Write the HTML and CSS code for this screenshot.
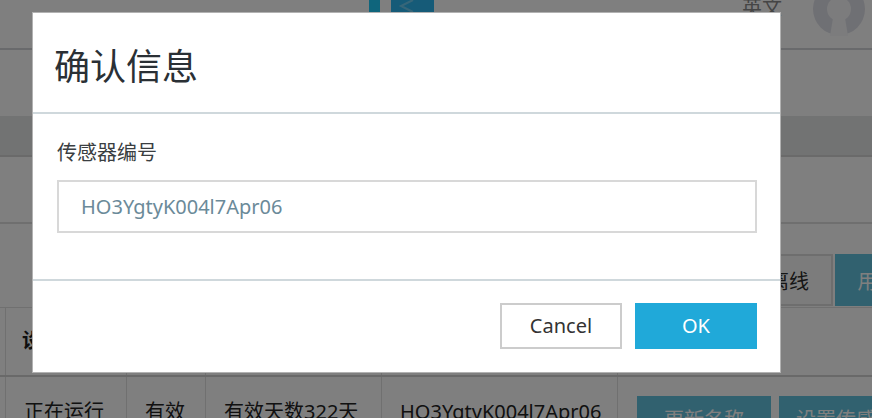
FILE: index.html
```html
<!DOCTYPE html>
<html lang="zh">
<head>
<meta charset="utf-8">
<title>确认信息</title>
<link rel="stylesheet" href="styles.css">
</head>
<body>
<div class="page">
  <header class="topbar">
    <div class="toggle-bar"></div>
    <div class="toggle-box">
      <svg class="chev" width="43" height="40" viewBox="0 0 43 40"><polyline points="22,0 10,6 22,12" fill="none" stroke="#6fcdf2" stroke-width="2"/></svg>
    </div>
    <span class="lang">英文</span>
    <div class="avatar">
      <svg width="54" height="54" viewBox="0 0 54 54">
        <circle cx="27" cy="27" r="26" fill="#dfe0e8"/>
        <circle cx="27" cy="27" r="12" fill="#f8f8fb"/>
        <polygon points="22,30 32,30 36,54 18,54" fill="#f8f8fb"/>
      </svg>
    </div>
  </header>
  <div class="crumb"></div>
  <div class="band"></div>
  <div class="toolbar"></div>
  <div class="actions">
    <button class="btn-outline">离线</button>
    <button class="btn-info">用户</button>
  </div>
  <div class="table">
    <div class="thead">
      <div class="th first">设备状态</div>
      <div class="th">状态</div>
      <div class="th">有效期</div>
      <div class="th">传感器编号</div>
      <div class="th last">操作</div>
    </div>
    <div class="trow">
      <div class="td first">正在运行</div>
      <div class="td">有效</div>
      <div class="td">有效天数322天</div>
      <div class="td">HO3YgtyK004l7Apr06</div>
      <div class="td last ops">
        <button class="btn-row">更新名称</button>
        <button class="btn-row">设置传感器</button>
      </div>
    </div>
  </div>
</div>

<div class="backdrop"></div>

<div class="modal">
  <div class="modal-header">
    <h4 class="modal-title">确认信息</h4>
  </div>
  <div class="modal-body">
    <label class="field-label" for="sensor">传感器编号</label>
    <input id="sensor" class="field-input" type="text" value="HO3YgtyK004l7Apr06" readonly>
  </div>
  <div class="modal-footer">
    <button class="btn btn-cancel">Cancel</button>
    <button class="btn btn-ok">OK</button>
  </div>
</div>
</body>
</html>
```

FILE: styles.css
```css
html, body {
  margin: 0;
  padding: 0;
}
body {
  overflow: hidden;
  background: #ffffff;
  font-family: "Noto Sans", "Noto Sans CJK SC", sans-serif;
  color: #23282c;
}
button {
  font-family: "Noto Sans", "Noto Sans CJK SC", sans-serif;
}

/* ---------- background page ---------- */
.page {
  width: 920px;
}
.topbar {
  height: 48px;
  border-bottom: 2px solid #d3d5d8;
  display: flex;
  align-items: flex-start;
  overflow: hidden;
}
.toggle-bar {
  margin-left: 369px;
  width: 11px;
  height: 40px;
  background: #1ecbf8;
}
.toggle-box {
  margin-left: 11px;
  width: 43px;
  height: 40px;
  background: #2cb6f0;
}
.chev {
  display: block;
}
.lang {
  margin-left: auto;
  margin-top: -2px;
  font-size: 20px;
  line-height: 20px;
  color: #8a8a8a;
}
.avatar {
  margin-left: 30px;
  margin-right: 54px;
  margin-top: -18px;
  width: 54px;
  height: 54px;
}
.avatar svg {
  display: block;
}
.crumb {
  height: 66px;
}
.band {
  height: 39px;
  background: #e4e6e6;
  border-bottom: 2px solid #d4d4d4;
}
.toolbar {
  height: 65px;
  border-bottom: 2px solid #dedede;
}
.actions {
  height: 83px;
  box-sizing: border-box;
  padding-top: 30px;
  display: flex;
  justify-content: flex-end;
  align-items: flex-start;
  gap: 2px;
}
.btn-outline {
  width: 80px;
  height: 52px;
  border: 2px solid #dcdcdc;
  background: #f8f8f8;
  font-size: 20px;
  color: #2a2a2a;
  padding: 0 8px 0 0;
}
.btn-info {
  width: 85px;
  height: 52px;
  border: 0;
  background: #62c2de;
  font-size: 20px;
  color: #ffffff;
  padding: 0;
}
.table {
  border-top: 1px solid #e0e0e0;
}
.thead, .trow {
  display: grid;
  grid-template-columns: 122px 79px 176px 236px 1fr;
  padding-left: 5px;
}
.thead {
  height: 67px;
  border-bottom: 2px solid #d2d2d2;
}
.first {
  border-left: 1px solid #e0e0e0;
}
.th {
  border-right: 1px solid #e0e0e0;
  padding: 23px 0 0 16px;
  font-size: 20px;
  line-height: 20px;
  font-weight: bold;
  color: #1e1e1e;
  white-space: nowrap;
  overflow: hidden;
}
.td {
  border-right: 1px solid #e0e0e0;
  padding: 25px 0 0 18px;
  height: 60px;
  font-size: 20px;
  line-height: 20px;
  color: #222222;
  white-space: nowrap;
  overflow: hidden;
}
.last {
  border-right: 0;
}
.ops {
  padding: 19px 0 0 19px;
  display: flex;
  gap: 8px;
}
.btn-row {
  flex: none;
  width: 134px;
  height: 45px;
  border: 0;
  background: #63c2de;
  color: #ffffff;
  font-size: 20px;
  padding: 0;
}

/* ---------- modal ---------- */
.backdrop {
  position: fixed;
  inset: 0;
  background: rgba(0, 0, 0, 0.5);
}
.modal {
  position: fixed;
  left: 32px;
  top: 12px;
  width: 747px;
  background: #ffffff;
  border: 1px solid rgba(0, 0, 0, 0.3);
}
.modal-header {
  padding: 36px 21px 27px;
  border-bottom: 2px solid #cfd8dc;
}
.modal-title {
  margin: 0;
  font-size: 36px;
  line-height: 36px;
  font-weight: normal;
  color: #2a3035;
}
.modal-body {
  padding: 29px 23px 46px 24px;
}
.field-label {
  display: block;
  font-size: 20px;
  line-height: 20px;
  color: #3a3e41;
  margin-bottom: 17px;
}
.field-input {
  display: block;
  box-sizing: border-box;
  width: 100%;
  height: 53px;
  margin: 0;
  border: 2px solid #d8d8d8;
  padding: 0 22px;
  font-family: "Noto Sans", "Noto Sans CJK SC", sans-serif;
  font-size: 20px;
  color: #6b8a99;
  background: #ffffff;
  outline: none;
}
.modal-footer {
  border-top: 2px solid #cfd8dc;
  padding: 22px 23px 23px;
  display: flex;
  justify-content: flex-end;
  gap: 13px;
}
.btn {
  width: 122px;
  height: 46px;
  padding: 0;
  font-size: 20px;
  line-height: 20px;
  cursor: pointer;
}
.btn-cancel {
  background: #ffffff;
  border: 2px solid #cccccc;
  color: #333333;
}
.btn-ok {
  background: #20a9d9;
  border: 0;
  color: #ffffff;
}
```
